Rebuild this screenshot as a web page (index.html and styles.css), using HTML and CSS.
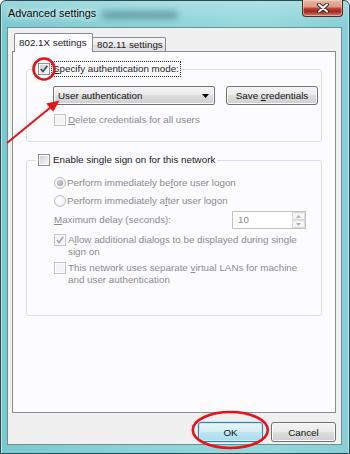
FILE: index.html
```html
<!DOCTYPE html>
<html>
<head>
<meta charset="utf-8">
<link rel="stylesheet" href="styles.css">
</head>
<body>
<div class="window">
  <div class="titlebar">
    <span class="title">Advanced settings</span>
    <span class="ghost"></span>
    <div class="close">
      <svg width="14" height="10" viewBox="0 0 14 10"><path d="M3 1.5 L11 8.5 M11 1.5 L3 8.5" stroke="#3b2c2a" stroke-width="4" stroke-linecap="round"/><path d="M3 1.5 L11 8.5 M11 1.5 L3 8.5" stroke="#fff" stroke-width="2" stroke-linecap="round"/></svg>
    </div>
  </div>
  <div class="client">
    <div class="tabs">
      <div class="tab active">802.1X settings</div>
      <div class="tab">802.11 settings</div>
    </div>
    <div class="panel">
      <div class="group g1">
        <div class="legend">
          <span class="cb"><svg width="10" height="10" viewBox="0 0 10 10"><path d="M1.8 5 L4 7.5 L8.3 1.8" fill="none" stroke="#3c4b66" stroke-width="1.7"/></svg></span>
          <span class="lbl focus"><u>S</u>pecify authentication mode:</span>
        </div>
        <div class="combo-row">
          <div class="combo btn"><span class="combo-text">User authentication</span><svg width="7" height="4" viewBox="0 0 7 4"><path d="M0 0 H7 L3.5 4 Z" fill="#000"/></svg></div>
          <div class="btn save"><span>Save <u>c</u>redentials</span></div>
        </div>
        <div class="check-row dis">
          <span class="cb dis"></span>
          <span class="txt"><u>D</u>elete credentials for all users</span>
        </div>
      </div>
      <div class="group g2">
        <div class="legend">
          <span class="cb"></span>
          <span class="lbl">Enable sin<u>g</u>le sign on for this network</span>
        </div>
        <div class="radio-row r1 dis">
          <span class="rb on"></span>
          <span class="txt">Perform immediately be<u>f</u>ore user logon</span>
        </div>
        <div class="radio-row r2 dis">
          <span class="rb"></span>
          <span class="txt">Perform immediately a<u>f</u>ter user logon</span>
        </div>
        <div class="delay-row dis">
          <span class="txt"><u>M</u>aximum delay (seconds):</span>
          <div class="spin">
            <span class="spin-val">10</span>
            <div class="spin-btns">
              <span class="spin-b"><svg width="5" height="3" viewBox="0 0 5 3"><path d="M0 3 L2.5 0 L5 3 Z" fill="#b0b0b0"/></svg></span>
              <span class="spin-b"><svg width="5" height="3" viewBox="0 0 5 3"><path d="M0 0 L2.5 3 L5 0 Z" fill="#b0b0b0"/></svg></span>
            </div>
          </div>
        </div>
        <div class="check-row multi c1 dis">
          <span class="cb dis"><svg width="10" height="10" viewBox="0 0 10 10"><path d="M1.8 5 L4 7.5 L8.3 1.8" fill="none" stroke="#a8a8a8" stroke-width="1.5"/></svg></span>
          <span class="txt">A<u>l</u>low additional dialogs to be displayed during single<br>sign on</span>
        </div>
        <div class="check-row multi c2 dis">
          <span class="cb dis"></span>
          <span class="txt">This network uses separate <u>v</u>irtual LANs for machine<br>and user authentication</span>
        </div>
      </div>
    </div>
    <div class="buttons">
      <div class="btn dlg default">OK</div>
      <div class="btn dlg">Cancel</div>
    </div>
  </div>
</div>
<svg class="annot" width="350" height="454" viewBox="0 0 350 454">
  <circle cx="44" cy="69" r="10.5" fill="none" stroke="#e8121a" stroke-width="2.6"/>
  <line x1="7" y1="143" x2="51" y2="107" stroke="#e8121a" stroke-width="2"/>
  <polygon points="59.5,100.5 53.2,111.8 46.2,103.4" fill="#e8121a"/>
  <ellipse cx="230.3" cy="430" rx="37.5" ry="18" fill="none" stroke="#e8121a" stroke-width="2.6"/>
</svg>
</body>
</html>
```

FILE: styles.css
```css
html, body {
  margin: 0;
  padding: 0;
}
body {
  position: relative;
  width: 350px;
  height: 454px;
  overflow: hidden;
  background: #fff;
  font-family: "Liberation Sans", Arial, sans-serif;
  font-size: 9.8px;
  color: #1a1a1a;
}
u { text-decoration: underline; text-underline-offset: 1px; }

.window {
  box-sizing: border-box;
  width: 350px;
  height: 454px;
  display: flex;
  flex-direction: column;
  border: 1px solid #2c4a50;
  border-radius: 6px 6px 0 0;
  background:
    linear-gradient(180deg, rgba(255,255,255,0.25) 0px, rgba(255,255,255,0) 26px),
    linear-gradient(90deg, #79c9cf 0%, #8ad3d8 40%, #93d8dc 75%, #86cfd4 100%);
  box-shadow: inset 1px 0 0 #b7e6e9, inset -1px 0 0 #b7e6e9;
}

.titlebar {
  height: 26px;
  flex-shrink: 0;
  display: flex;
  align-items: flex-start;
}
.title {
  margin: 6px 0 0 7px;
  font-size: 10.8px;
  line-height: 13px;
  color: #0a0a0a;
  text-shadow: 0 0 5px #e8fbfc, 0 0 8px #e8fbfc;
}
.ghost {
  width: 76px;
  height: 8px;
  margin: 10px 0 0 6px;
  background: #3f7378;
  border-radius: 4px;
  filter: blur(3px);
  opacity: 0.55;
}
.close {
  margin: -1px 6px 0 auto;
  width: 41px;
  height: 17px;
  box-sizing: border-box;
  border: 1px solid #4b2c26;
  border-top: none;
  border-radius: 0 0 4px 4px;
  background: linear-gradient(180deg, #e9b9a6 0%, #d89a82 42%, #b9382d 55%, #a8271f 72%, #cf866c 100%);
  box-shadow: inset 0 0 0 1px rgba(255,220,200,0.5);
  display: flex;
  align-items: center;
  justify-content: center;
}

.client {
  flex: 1;
  margin: 0 7px 8px 6px;
  border: 1px solid #6d9095;
  background: #f0f0f0;
  display: flex;
  flex-direction: column;
  padding: 5px 5px 2px 4px;
  min-height: 0;
}

.tabs {
  height: 18px;
  display: flex;
  align-items: flex-end;
  padding-left: 2px;
  position: relative;
  z-index: 1;
}
.tab {
  box-sizing: border-box;
  border: 1px solid #898c95;
  border-bottom: none;
  line-height: 12px;
  white-space: nowrap;
}
.tab.active {
  width: 79px;
  height: 19px;
  margin-bottom: -1px;
  padding: 3px 0 0 4px;
  background: #fcfcfe;
  border-radius: 2px 2px 0 0;
}
.tab:not(.active) {
  width: 73px;
  height: 14px;
  padding: 1px 0 0 4px;
  border-left: none;
  border-radius: 0 2px 0 0;
  background: linear-gradient(180deg, #f6f6f6 0%, #ebebeb 50%, #dcdcdc 51%, #e4e4e4 100%);
}

.panel {
  flex: 1;
  border: 1px solid #898c95;
  background: #fcfcfe;
  padding: 17px 13px 0 13px;
}

.group {
  border: 1px solid #d5dfe5;
  border-radius: 3px;
  padding-bottom: 15px;
}
.g2 {
  margin-top: 18px;
  padding-bottom: 29px;
}
.legend {
  display: flex;
  align-items: center;
  width: max-content;
  height: 12px;
  margin: -7px 0 0 9px;
  padding: 0 2px;
  background: #fcfcfe;
}
.lbl {
  margin-left: 3px;
  line-height: 12px;
  white-space: nowrap;
}
.lbl.focus {
  outline: 1px dotted #333;
  outline-offset: 1px;
}

.cb {
  width: 12px;
  height: 12px;
  box-sizing: border-box;
  flex-shrink: 0;
  border: 1px solid #8e8f8f;
  background: linear-gradient(135deg, #c9ccd2 0%, #eceef0 70%, #f8f8f8 100%);
  box-shadow: inset 0 0 0 1px #fafafa;
  display: flex;
  align-items: center;
  justify-content: center;
}
.cb.dis {
  border-color: #c3c3c3;
  background: #f4f4f4;
  box-shadow: inset 0 0 0 1px #fdfdfd;
}
.cb svg { display: block; }

.rb {
  width: 12px;
  height: 12px;
  box-sizing: border-box;
  flex-shrink: 0;
  border: 1px solid #bdbdbd;
  border-radius: 50%;
  background: radial-gradient(circle at 40% 40%, #ffffff 0%, #ebebeb 100%);
  display: flex;
  align-items: center;
  justify-content: center;
}
.rb.on::after {
  content: "";
  width: 6px;
  height: 6px;
  border-radius: 50%;
  background: radial-gradient(circle at 35% 35%, #d6d6d6 0%, #8f8f8f 100%);
}

.dis .txt { color: #8b8b8b; }
.txt { line-height: 12px; white-space: nowrap; }

.combo-row {
  display: flex;
  gap: 11px;
  height: 19px;
  margin: 11px 0 0 26px;
}
.btn {
  box-sizing: border-box;
  height: 19px;
  border: 1px solid #707070;
  border-radius: 3px;
  background: linear-gradient(180deg, #f3f3f3 0%, #ebebeb 48%, #dedede 50%, #cfcfcf 100%);
  box-shadow: inset 0 0 0 1px #fbfbfb;
  display: flex;
  align-items: center;
  justify-content: center;
  color: #111;
  white-space: nowrap;
}
.combo {
  width: 162px;
  justify-content: space-between;
  padding: 0 5px 0 4px;
  border-radius: 2px;
}
.save { width: 92px; }

.check-row, .radio-row {
  display: flex;
  align-items: flex-start;
  margin-left: 27px;
}
.check-row { gap: 2px; margin-top: 9px; }
.radio-row { gap: 1px; height: 14px; align-items: center; }
.r1 { margin-top: 10px; }
.r2 { margin-top: 4px; }

.delay-row {
  display: flex;
  align-items: center;
  justify-content: space-between;
  height: 18px;
  margin: 3px 15px 0 27px;
}
.spin {
  width: 74px;
  height: 18px;
  box-sizing: border-box;
  border: 1px solid #c2c2c2;
  background: #fff;
  display: flex;
}
.spin-val {
  flex: 1;
  padding-left: 5px;
  line-height: 16px;
  color: #8b8b8b;
}
.spin-btns {
  width: 13px;
  display: flex;
  flex-direction: column;
}
.spin-b {
  flex: 1;
  box-sizing: border-box;
  border: 1px solid #dadada;
  background: #f5f5f5;
  display: flex;
  align-items: center;
  justify-content: center;
}
.spin-b svg { display: block; }

.check-row.multi .cb { margin-top: 0; }
.c1 { margin-top: 5px; }
.c2 { margin-top: 4px; }

.buttons {
  display: flex;
  justify-content: flex-end;
  gap: 8px;
  margin-top: 9px;
  height: 20px;
}
.dlg {
  width: 65px;
  height: 20px;
}
.default {
  border-color: #3c7fb1;
  background: linear-gradient(180deg, #e8f6fb 0%, #d5eff8 48%, #bde6f3 50%, #a9dceb 100%);
  box-shadow: inset 0 0 0 1px #c2ecf7, 0 0 2px #7fd0e6;
}

.annot {
  position: absolute;
  left: 0;
  top: 0;
  pointer-events: none;
}
```
